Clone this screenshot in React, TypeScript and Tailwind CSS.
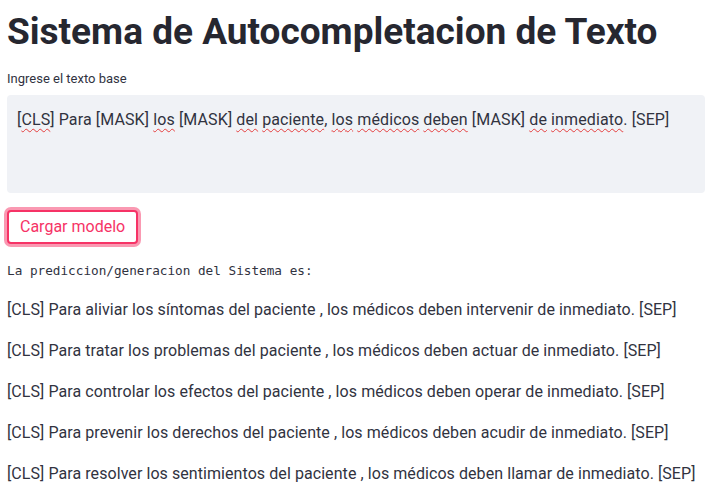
import React from 'react';

const results = [
  '[CLS] Para aliviar los síntomas del paciente , los médicos deben intervenir de inmediato. [SEP]',
  '[CLS] Para tratar los problemas del paciente , los médicos deben actuar de inmediato. [SEP]',
  '[CLS] Para controlar los efectos del paciente , los médicos deben operar de inmediato. [SEP]',
  '[CLS] Para prevenir los derechos del paciente , los médicos deben acudir de inmediato. [SEP]',
  '[CLS] Para resolver los sentimientos del paciente , los médicos deben llamar de inmediato. [SEP]',
];

// spell-check squiggle, as the browser draws it in the textarea
const Sq: React.FC<{ children: React.ReactNode }> = ({ children }) => (
  <span className="underline decoration-[#e53e3e] decoration-wavy decoration-1 underline-offset-[3px]">{children}</span>
);

const App: React.FC = () => {
  return (
    <div
      className="min-h-[496px] bg-white px-[7px] text-[#31333f]"
      style={{ fontFamily: 'Roboto, "Noto Sans", sans-serif' }}
    >
      {/* Title */}
      <h1 className="pt-[10px] text-[37px] font-bold leading-[44px] text-[#262730]">
        Sistema de Autocompletacion de Texto
      </h1>

      {/* Text area */}
      <label className="mt-[17px] block text-[13px] leading-[16px]">Ingrese el texto base</label>
      <div className="mt-[8px] h-[98px] w-[698px] rounded-[4px] bg-[#f0f2f6] px-[10px] py-[15px] text-[16px] leading-[20px] tracking-[0.12px]">
        [<Sq>CLS</Sq>] Para [MASK] <Sq>los</Sq> [MASK] <Sq>del</Sq> <Sq>paciente</Sq>, <Sq>los</Sq> <Sq>médicos</Sq>{' '}
        <Sq>deben</Sq> [MASK] <Sq>de</Sq> <Sq>inmediato</Sq>. [SEP]
      </div>

      {/* Button */}
      <button className="mt-[17px] h-[34px] rounded-[4px] border-2 border-[#f63366] bg-white px-[11px] text-[16px] text-[#f63366] shadow-[0_0_0_3px_rgba(246,51,102,0.5)]">
        Cargar modelo
      </button>

      {/* Output */}
      <div
        className="mt-[19px] text-[12.7px] leading-[16px]"
        style={{ fontFamily: '"DejaVu Sans Mono", monospace' }}
      >
        La prediccion/generacion del Sistema es:
      </div>
      <div className="mt-[19px] flex flex-col gap-[17px]">
        {results.map((r, i) => (
          <p key={i} className="text-[16px] leading-[24px] tracking-[0.07px]">
            {r}
          </p>
        ))}
      </div>
    </div>
  );
};

export default App;
